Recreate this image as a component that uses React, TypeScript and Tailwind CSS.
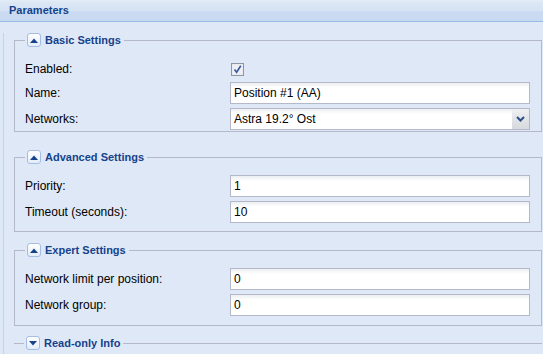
import type { ReactNode } from "react";

const font = "font-['Liberation_Sans',Arial,sans-serif]";

function Toggle({ open }: { open: boolean }) {
  return (
    <span className="flex h-[14px] w-[14px] items-center justify-center rounded-[3px] border border-[#a3bde3] bg-[linear-gradient(to_bottom,#ffffff,#e3ecf8)]">
      <svg width="8" height="5" viewBox="0 0 8 5">
        {open ? (
          <polygon points="0,5 4,0.5 8,5" fill="#15428b" />
        ) : (
          <polygon points="0,0 4,4.5 8,0" fill="#15428b" />
        )}
      </svg>
    </span>
  );
}

function FieldSet({
  title,
  open = true,
  className = "",
  children,
}: {
  title: string;
  open?: boolean;
  className?: string;
  children?: ReactNode;
}) {
  return (
    <fieldset
      className={`${
        open ? "border border-[#b5b8c8]" : "border-t border-[#b5b8c8]"
      } pl-[10px] pr-[11px] ${className}`}
    >
      <legend className="flex h-[14px] items-center gap-[4px] pl-[2px] pr-[3px]">
        <Toggle open={open} />
        <span className="text-[11px] font-bold leading-none text-[#15428b]">
          {title}
        </span>
      </legend>
      {children}
    </fieldset>
  );
}

function Row({ label, children, last }: { label: string; children: ReactNode; last?: boolean }) {
  return (
    <div className={`flex h-[22px] items-center ${last ? "" : "mb-[4px]"}`}>
      <div className="w-[205px] text-[12px] text-black">{label}</div>
      <div className="flex-1">{children}</div>
    </div>
  );
}

function TextBox({ value }: { value: string }) {
  return (
    <div className="flex h-[22px] items-center border border-[#b5b8c8] bg-[linear-gradient(to_bottom,#eceef0_0px,#ffffff_5px)] pl-[3px] text-[12px] text-black">
      {value}
    </div>
  );
}

function Combo({ value }: { value: string }) {
  return (
    <div className="flex h-[22px] border border-[#b5b8c8] bg-[linear-gradient(to_bottom,#eceef0_0px,#ffffff_5px)] text-[12px] text-black">
      <div className="flex flex-1 items-center pl-[3px]">{value}</div>
      <div className="flex w-[17px] items-center justify-center bg-[linear-gradient(to_bottom,#eef0f2,#d6d9dd)]">
        <svg width="9" height="6" viewBox="0 0 9 6">
          <path d="M1 1 L4.5 4.5 L8 1" stroke="#2c4f8c" strokeWidth="2" fill="none" />
        </svg>
      </div>
    </div>
  );
}

function CheckBox() {
  return (
    <svg width="13" height="13" viewBox="0 0 13 13" className="ml-[1px] block">
      <rect x="0.5" y="0.5" width="12" height="12" fill="#e4e6ea" stroke="#8e96a3" />
      <rect x="1.5" y="1.5" width="10" height="10" fill="#eef0f3" />
      <path d="M3.5 6.5 L5.6 9.2 L9.8 2.8" stroke="#3b5da6" strokeWidth="1.7" fill="none" />
    </svg>
  );
}

export default function App() {
  return (
    <div className={`h-[354px] w-[543px] overflow-hidden bg-[#dfe8f6] ${font}`}>
      <div className="flex h-[22px] items-center border-b border-[#99bbe8] bg-[linear-gradient(to_bottom,#e4edf8_0px,#dbe6f5_3px,#d6e3f4_11px,#cbdbf1_11px,#c7d9f1_21px)] pl-[9px]">
        <span className="text-[11px] font-bold text-[#15428b]">Parameters</span>
      </div>

      <div className="ml-[3px] h-[332px] border-l border-[#c3d3ea] pl-[10px] pr-[1px]">
        <FieldSet title="Basic Settings" className="mt-[11px] mb-[18px] pt-[13px] pb-[1px]">
          <div className="mb-[4px] flex h-[18px] items-center">
            <div className="w-[205px] text-[12px] text-black">Enabled:</div>
            <CheckBox />
          </div>
          <Row label="Name:">
            <TextBox value="Position #1 (AA)" />
          </Row>
          <Row label="Networks:" last>
            <Combo value="Astra 19.2° Ost" />
          </Row>
        </FieldSet>

        <FieldSet title="Advanced Settings" className="mb-[11px] pt-[11px] pb-[8px]">
          <Row label="Priority:">
            <TextBox value="1" />
          </Row>
          <Row label="Timeout (seconds):" last>
            <TextBox value="10" />
          </Row>
        </FieldSet>

        <FieldSet title="Expert Settings" className="mb-[10px] pt-[11px] pb-[9px]">
          <Row label="Network limit per position:">
            <TextBox value="0" />
          </Row>
          <Row label="Network group:" last>
            <TextBox value="0" />
          </Row>
        </FieldSet>

        <FieldSet title="Read-only Info" open={false} />
      </div>
    </div>
  );
}
